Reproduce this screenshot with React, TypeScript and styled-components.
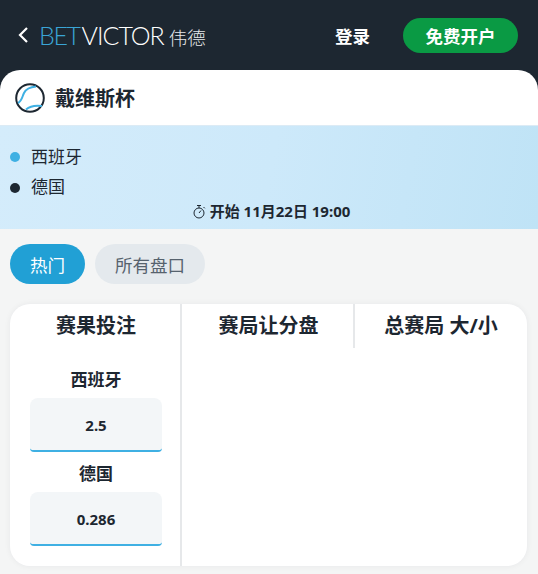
import * as React from 'react'
import styled, {createGlobalStyle} from 'styled-components'

const Global = createGlobalStyle`
  html, body {
    margin: 0;
    padding: 0;
    background: #f4f5f5;
  }
  * {
    box-sizing: border-box;
  }
  body {
    font-family: "Noto Sans", "Noto Sans CJK SC", sans-serif;
    color: #1d2731;
  }
`

const Page = styled.div`
  width: 538px;
  height: 574px;
  overflow: hidden;
  background: #f4f5f5;
`

// Top bar
const Header = styled.header`
  height: 90px;
  margin-bottom: -20px;
  padding: 0 20px 20px 17px;
  display: flex;
  align-items: center;
  background: #1d2731;
`

const Back = styled.svg`
  width: 12px;
  height: 18px;
  margin-right: 10px;
`

const Logo = styled.div`
  display: flex;
  align-items: baseline;
  font-family: Lato, sans-serif;
  font-weight: 300;
  font-size: 25px;
  letter-spacing: -1px;
  color: #fff;
`

const LogoBlue = styled.span`
  margin-right: 2px;
  letter-spacing: -1.4px;
  color: #3aa5d6;
`

const LogoLocale = styled.span`
  margin-left: 5px;
  font-family: "Noto Sans CJK SC", sans-serif;
  font-weight: 300;
  font-size: 18.5px;
  letter-spacing: 0;
  color: #e6e8ea;
`

const Login = styled.span`
  margin-left: auto;
  margin-right: 33px;
  font-family: "Noto Sans CJK SC", sans-serif;
  font-weight: 700;
  font-size: 17.5px;
  color: #fff;
`

const Signup = styled.span`
  width: 115px;
  height: 35px;
  display: flex;
  align-items: center;
  justify-content: center;
  border-radius: 18px;
  background: #0a9a44;
  font-family: "Noto Sans CJK SC", sans-serif;
  font-weight: 700;
  font-size: 17.5px;
  color: #fff;
`

// Competition title
const TitleBar = styled.div`
  position: relative;
  height: 55px;
  padding-left: 15px;
  display: flex;
  align-items: center;
  gap: 10px;
  background: #fff;
  border-radius: 20px 20px 0 0;
`

const Ball = styled.svg`
  width: 30px;
  height: 30px;
`

const Title = styled.h1`
  margin: 0;
  font-family: "Noto Sans CJK SC", sans-serif;
  font-weight: 700;
  font-size: 20px;
  color: #1d2731;
`

// Match summary band
const Match = styled.section`
  height: 104px;
  padding: 14px 0 0 10px;
  border-top: 1px solid #dcebf5;
  background: linear-gradient(100deg, #d4ecfb 0%, #cde9fa 50%, #bfe3f6 100%);
`

const Team = styled.div`
  height: 30.5px;
  display: flex;
  align-items: center;
  gap: 11px;
  font-family: "Noto Sans CJK SC", sans-serif;
  font-size: 17px;
  color: #1d2731;
`

const Dot = styled.span<{$color: string}>`
  width: 10px;
  height: 10px;
  margin-top: 4px;
  border-radius: 50%;
  background: ${({$color}) => $color};
`

const Start = styled.div`
  padding-right: 6px;
  display: flex;
  align-items: center;
  justify-content: center;
  gap: 4px;
  font-size: 15px;
  font-weight: 700;
  font-family: "Noto Sans", "Noto Sans CJK SC", sans-serif;
  line-height: 20px;
`

const Clock = styled.svg`
  width: 14px;
  height: 15px;
`

// Tabs
const Tabs = styled.nav`
  padding: 15px 10px 20px;
  display: flex;
  gap: 10px;
`

const Tab = styled.span<{$active?: boolean}>`
  height: 40px;
  padding: 0 20px;
  display: flex;
  align-items: center;
  border-radius: 20px;
  font-family: "Noto Sans CJK SC", sans-serif;
  font-size: 17.5px;
  background: ${({$active}) => ($active ? '#21a0d5' : '#e4e9ed')};
  color: ${({$active}) => ($active ? '#fff' : '#56626d')};
`

// Markets card
const Card = styled.section`
  width: 517px;
  height: 262px;
  margin-left: 10px;
  display: grid;
  grid-template-columns: 172px 173px 172px;
  background: #fff;
  border-radius: 20px;
  box-shadow: 0 0 6px rgba(29, 39, 49, 0.06);
`

const Column = styled.div<{$divider?: 'full' | 'short'}>`
  position: relative;
  padding: 0 20px;

  ${({$divider}) => $divider && `
    &::after {
      content: "";
      position: absolute;
      top: 0;
      right: 0;
      width: 2px;
      height: ${$divider === 'full' ? '100%' : '44px'};
      background: #e6e8ea;
    }
  `}
`

const ColumnTitle = styled.h2`
  height: 44px;
  margin: 0;
  padding-bottom: 4px;
  display: flex;
  align-items: center;
  justify-content: center;
  white-space: nowrap;
  font-family: "Noto Sans", "Noto Sans CJK SC", sans-serif;
  font-weight: 700;
  font-size: 20px;
  color: #1d2731;
`

const Selections = styled.div`
  padding-top: 13px;
`

const Selection = styled.div`
  display: flex;
  flex-direction: column;
  align-items: center;
`

const SelectionName = styled.div`
  height: 34px;
  margin-bottom: 3px;
  display: flex;
  align-items: center;
  font-family: "Noto Sans CJK SC", sans-serif;
  font-weight: 700;
  font-size: 17px;
  color: #1d2731;
`

const Odds = styled.div`
  width: 132px;
  height: 54px;
  margin-bottom: 3px;
  padding-top: 2px;
  display: flex;
  align-items: center;
  justify-content: center;
  border-radius: 8px 8px 4px 4px;
  border-bottom: 2px solid #3fb0e3;
  background: #f3f6f8;
  font-weight: 700;
  font-size: 15px;
  color: #1d2731;
`

export default function App() {
  return (
    <Page>
      <Global />
      <Header>
        <Back viewBox="0 0 12 18" fill="none">
          <path d="M10 2 L3 9 L10 16" stroke="#fff" strokeWidth="2.2" />
        </Back>
        <Logo>
          <LogoBlue>BET</LogoBlue>VICTOR
          <LogoLocale>伟德</LogoLocale>
        </Logo>
        <Login>登录</Login>
        <Signup>免费开户</Signup>
      </Header>
      <TitleBar>
        <Ball viewBox="0 0 30 30" fill="none">
          <circle cx="15" cy="15" r="13.8" fill="#fff" stroke="#1d2731" strokeWidth="2" />
          <path d="M3 20 C7 18 7 14 9 10 C11 6 15 4 21 3.5" stroke="#3fb0e3" strokeWidth="2" />
          <path d="M11 26.5 C15 23 20 22 27 23" stroke="#3fb0e3" strokeWidth="2" />
        </Ball>
        <Title>戴维斯杯</Title>
      </TitleBar>
      <Match>
        <Team>
          <Dot $color="#3fb0e3" />
          西班牙
        </Team>
        <Team>
          <Dot $color="#1d2731" />
          德国
        </Team>
        <Start>
          <Clock viewBox="0 0 14 15" fill="none" stroke="#1d2731" strokeWidth="1">
            <circle cx="7" cy="9" r="5" />
            <path d="M7 9 L9 6.5 M5 1.5 H9 M7 1.5 V4 M11.5 3 L12.8 4.3" />
          </Clock>
          开始 11月22日 19:00
        </Start>
      </Match>
      <Tabs>
        <Tab $active>热门</Tab>
        <Tab>所有盘口</Tab>
      </Tabs>
      <Card>
        <Column $divider="full">
          <ColumnTitle>赛果投注</ColumnTitle>
          <Selections>
            <Selection>
              <SelectionName>西班牙</SelectionName>
              <Odds>2.5</Odds>
            </Selection>
            <Selection>
              <SelectionName>德国</SelectionName>
              <Odds>0.286</Odds>
            </Selection>
          </Selections>
        </Column>
        <Column $divider="short">
          <ColumnTitle>赛局让分盘</ColumnTitle>
        </Column>
        <Column>
          <ColumnTitle>总赛局 大/小</ColumnTitle>
        </Column>
      </Card>
    </Page>
  )
}
